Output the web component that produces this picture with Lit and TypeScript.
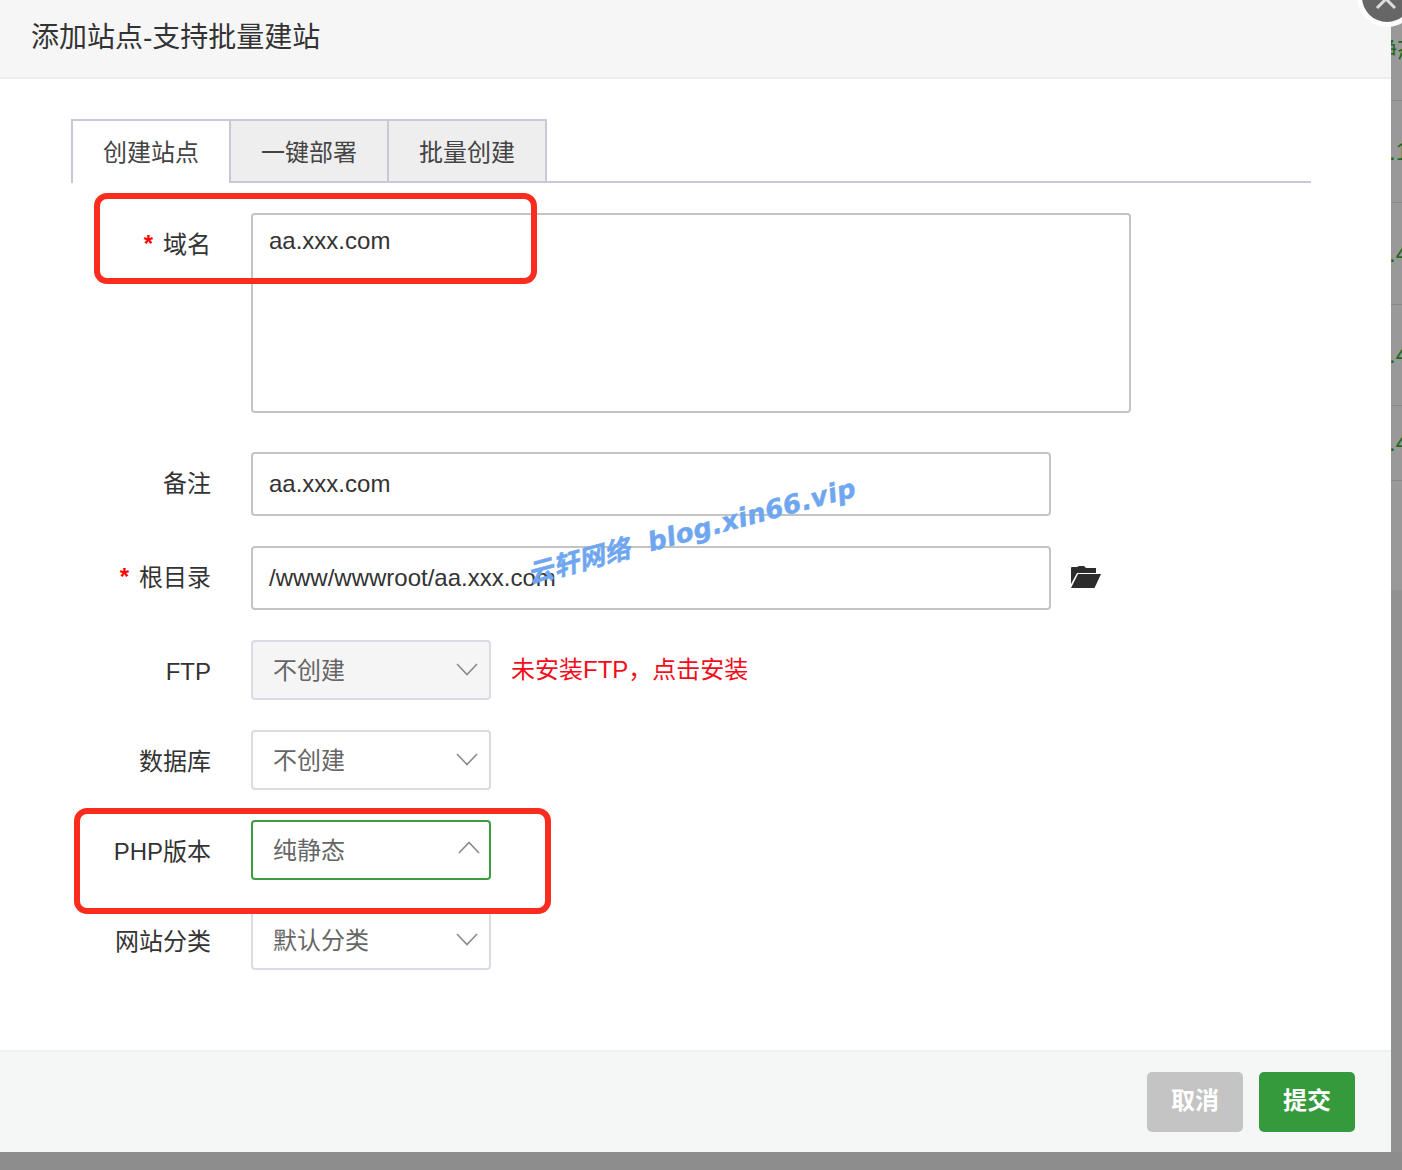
import { LitElement, html, css, svg } from "lit";
import { customElement } from "lit/decorators.js";

const chevron = (up = false) => html`<svg class=${up ? "chev up" : "chev"} viewBox="0 0 22 13" width="22" height="13">
  ${svg`<path d=${up ? "M1 12 L11 1.500 L21 12" : "M1 1 L11 11.500 L21 1"} fill="none" stroke="#8a8a8a" stroke-width="1.600"/>`}
</svg>`;

@customElement("app-root")
export class AppRoot extends LitElement {
  static styles = css`
    :host {
      display: block;
      position: relative;
      width: 1402px;
      height: 1170px;
      overflow: hidden;
      background: linear-gradient(#999 0 590px, #919191 590px 1152px, #8d8d8d 1152px);
      font-family: "Liberation Sans", "Noto Sans CJK SC", sans-serif;
      color: #333;
    }
    .page {
      position: absolute;
      inset: 0;
      display: flex;
      flex-direction: column;
      color: #1c6a1c;
      font-size: 24px;
    }
    .page-row {
      display: flex;
      align-items: center;
      padding-left: 1389px;
      white-space: nowrap;
      border-bottom: 1px solid #888;
      box-sizing: border-box;
    }
    .r1 { height: 101px; padding-left: 1373px; padding-bottom: 5px; }
    .r2, .r3 { height: 102px; }
    .r4 { height: 101px; }
    .r5 { height: 75px; }
    .dialog {
      position: absolute;
      left: 0;
      top: 0;
      width: 1391px;
      height: 1152px;
      background: #fff;
      display: flex;
      flex-direction: column;
    }
    .head {
      height: 79px;
      box-sizing: border-box;
      background: #f6f6f6;
      border-bottom: 2px solid #ececec;
      padding-left: 31px;
      font-size: 28px;
      line-height: 75px;
      color: #333;
      flex: none;
    }
    .body {
      flex: 1;
      padding: 40px 0 0 71px;
      min-height: 0;
    }
    .tabs {
      display: flex;
      width: 1240px;
      height: 64px;
      box-sizing: border-box;
      border-bottom: 2px solid #c9c8d9;
    }
    .tab {
      box-sizing: border-box;
      width: 158px;
      height: 64px;
      flex: none;
      border: 2px solid #c9c8d9;
      border-left: none;
      background: #eeeeee;
      font-size: 24px;
      line-height: 63px;
      text-align: center;
      color: #444;
    }
    .tab.on {
      width: 160px;
      border-left: 2px solid #c9c8d9;
      border-bottom: none;
      background: #fff;
    }
    .form {
      margin-top: 30px;
      display: flex;
      flex-direction: column;
      gap: 30px;
    }
    .row {
      display: flex;
      align-items: flex-start;
      gap: 40px;
    }
    .row.tall { margin-bottom: 9px; }
    .label {
      width: 140px;
      flex: none;
      text-align: right;
      font-size: 24px;
      color: #333;
      line-height: 64px;
    }
    .star {
      color: #f00;
      margin-right: 10px;
      font-size: 24px;
      font-weight: 700;
      position: relative;
      top: -1px;
    }
    .input {
      box-sizing: border-box;
      width: 800px;
      height: 64px;
      border: 2px solid #c4c4c4;
      border-radius: 4px;
      padding-left: 16px;
      font-size: 24px;
      line-height: 60px;
      color: #333;
      white-space: nowrap;
    }
    .area {
      width: 880px;
      height: 200px;
      line-height: 51px;
    }
    .folder {
      align-self: center;
      margin: 0 0 2px -21px;
      display: block;
    }
    .select {
      box-sizing: border-box;
      width: 240px;
      height: 60px;
      border: 2px solid #d9dbe6;
      border-radius: 4px;
      padding: 0 11px 0 20px;
      display: flex;
      align-items: center;
      justify-content: space-between;
      font-size: 24px;
      color: #666;
      background: #fff;
    }
    .select span { position: relative; top: -2px; }
    .select.off { background: #f5f5f6; }
    .select.active { border-color: #3a9d3f; padding-right: 9px; }
    .chev { display: block; margin-top: -2px; }
    .chev.up { margin-top: -5px; }
    .warn {
      margin-left: -20px;
      font-size: 24px;
      color: #f30d1b;
      line-height: 60px;
    }
    .lab60 { height: 60px; line-height: 64px; }
    .foot {
      flex: none;
      height: 102px;
      box-sizing: border-box;
      border-top: 2px solid #eeefef;
      background: #f5f6f6;
      display: flex;
      justify-content: flex-end;
      align-items: center;
      gap: 16px;
      padding: 0 36px 0 0;
    }
    .btn {
      width: 96px;
      height: 60px;
      border-radius: 5px;
      color: #fff;
      font-size: 24px;
      font-weight: 700;
      line-height: 57px;
      text-align: center;
    }
    .btn.gray { background: #c4c4c4; }
    .btn.green { background: #359a3c; }
    .mark {
      position: absolute;
      box-sizing: border-box;
      border: 6px solid #f92c1e;
      border-radius: 13px;
      pointer-events: none;
    }
    .mark.a { left: 94px; top: 193px; width: 443px; height: 91px; }
    .mark.b { left: 74px; top: 808px; width: 477px; height: 106px; }
    .wm {
      position: absolute;
      left: 528px;
      top: 555px;
      transform: rotate(-15deg);
      transform-origin: 0 50%;
      font-family: "DejaVu Sans", "Noto Sans CJK SC", sans-serif;
      font-weight: 700;
      font-style: italic;
      font-size: 26px;
      letter-spacing: 0.4px;
      line-height: 40px;
      color: #6ea6ef;
      -webkit-text-stroke: 0.5px #6ea6ef;
      white-space: pre;
      pointer-events: none;
    }
    .close {
      position: absolute;
      left: 1352px;
      top: 0;
      display: block;
    }
  `;

  render() {
    return html`
      <div class="page">
        <div class="page-row r1">静态</div>
        <div class="page-row r2">.1</div>
        <div class="page-row r3">.4</div>
        <div class="page-row r4">.4</div>
        <div class="page-row r5">.4</div>
      </div>
      <div class="dialog">
        <div class="head">添加站点-支持批量建站</div>
        <div class="body">
          <div class="tabs">
            <div class="tab on">创建站点</div>
            <div class="tab">一键部署</div>
            <div class="tab">批量创建</div>
          </div>
          <div class="form">
            <div class="row tall">
              <div class="label"><span class="star">*</span>域名</div>
              <div class="input area">aa.xxx.com</div>
            </div>
            <div class="row">
              <div class="label">备注</div>
              <div class="input">aa.xxx.com</div>
            </div>
            <div class="row">
              <div class="label"><span class="star">*</span>根目录</div>
              <div class="input">/www/wwwroot/aa.xxx.com</div>
              <svg class="folder" width="32" height="24" viewBox="0 0 32 24">
                <path d="M1 3 Q1 2 2 2 H7 L9 1 H14 L16 3 H26 V8 H7 L1 19 Z" fill="#2c2c2c"/>
                <path d="M8 9 H31 L24.500 23 H1 Z" fill="#2c2c2c"/>
              </svg>
            </div>
            <div class="row">
              <div class="label lab60">FTP</div>
              <div class="select off"><span>不创建</span>${chevron()}</div>
              <div class="warn">未安装FTP，点击安装</div>
            </div>
            <div class="row">
              <div class="label lab60">数据库</div>
              <div class="select"><span>不创建</span>${chevron()}</div>
            </div>
            <div class="row">
              <div class="label lab60">PHP版本</div>
              <div class="select active"><span>纯静态</span>${chevron(true)}</div>
            </div>
            <div class="row">
              <div class="label lab60">网站分类</div>
              <div class="select"><span>默认分类</span>${chevron()}</div>
            </div>
          </div>
        </div>
        <div class="foot">
          <div class="btn gray">取消</div>
          <div class="btn green">提交</div>
        </div>
      </div>
      <div class="wm">云轩网络  blog.xin66.vip</div>
      <div class="mark a"></div>
      <div class="mark b"></div>
      <svg class="close" width="50" height="30" viewBox="0 0 50 30">
        <circle cx="35" cy="-3" r="30" fill="#fff" opacity="0.95"/>
        <circle cx="35" cy="-3" r="25" fill="#666"/>
        <path d="M25 8 L34 -1 L43 8" fill="none" stroke="#ddd" stroke-width="3"/>
      </svg>
    `;
  }
}
